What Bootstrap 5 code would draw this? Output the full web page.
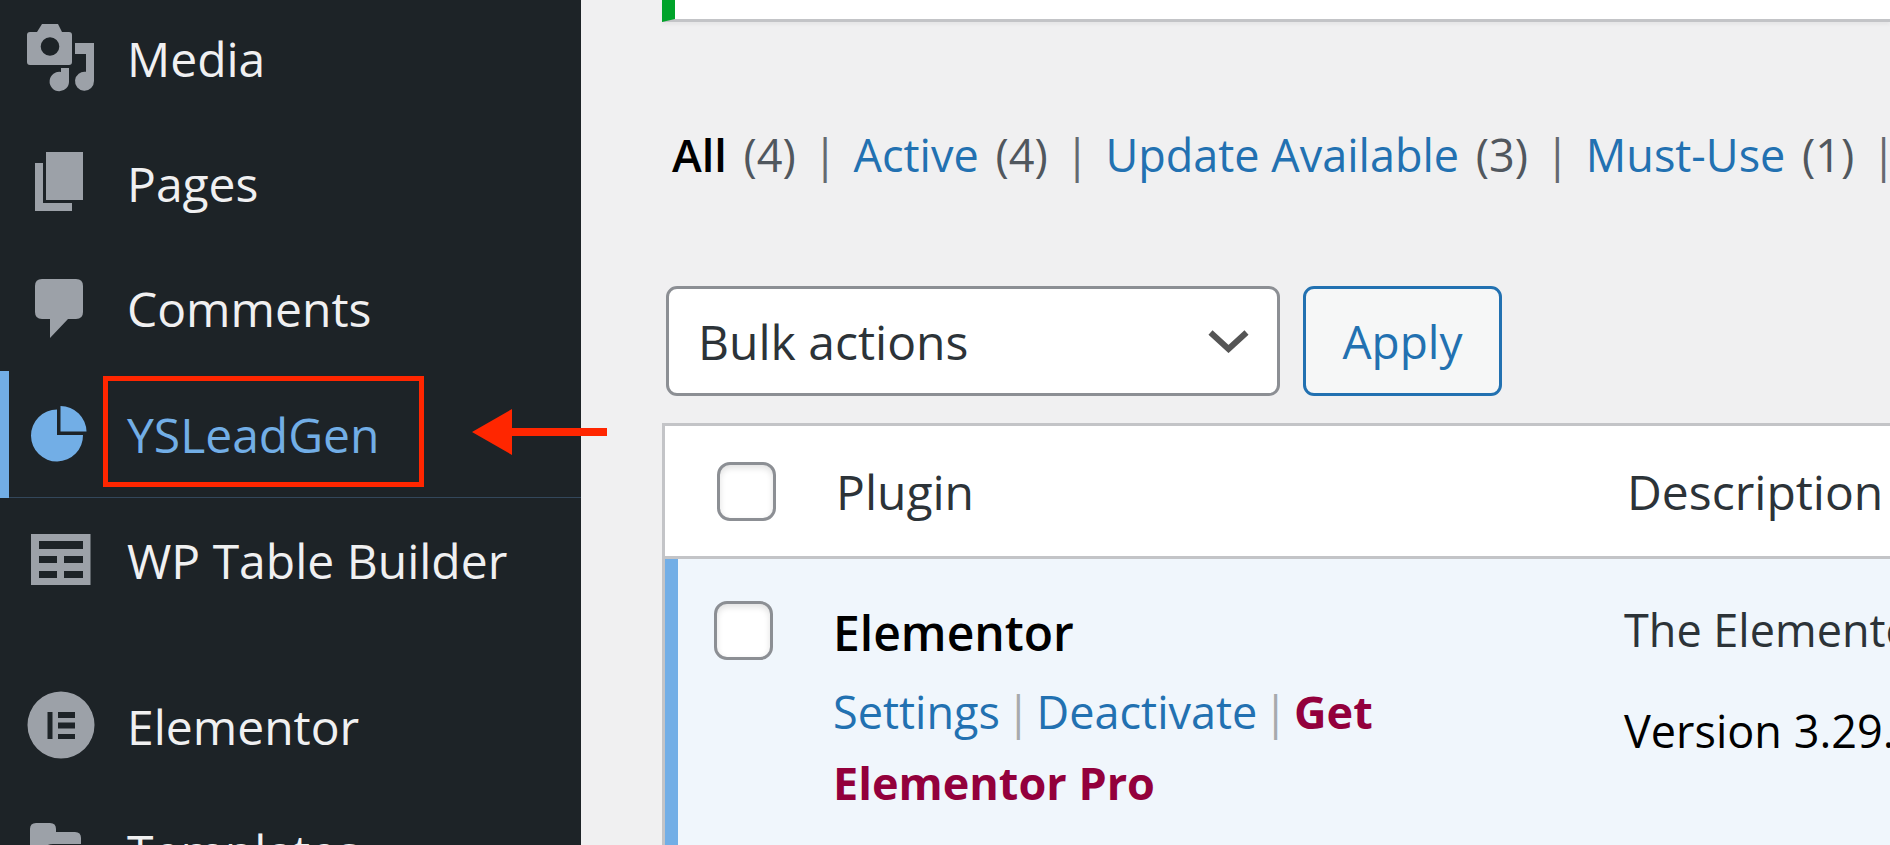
<!DOCTYPE html>
<html lang="en">
<head>
<meta charset="utf-8">
<meta name="viewport" content="width=device-width, initial-scale=1">
<title>Plugins</title>
<link href="https://cdn.jsdelivr.net/npm/bootstrap@5.3.0/dist/css/bootstrap.min.css" rel="stylesheet">
<style>
body{font-family:"Open Sans","Noto Sans",sans-serif;background:#f0f0f1;font-size:45px;line-height:71px;color:#2c3338}
a{text-decoration:none;color:#2271b1}
.side{width:581px;background:#1d2327}
.side-list{margin-top:-4px}
.side-link{height:125px;padding-left:23px;gap:30px;color:#f0f0f1;font-size:48px;white-space:nowrap;position:relative}
.side-link svg{width:74px;height:74px;margin-bottom:4px;flex:none;fill:#9ca1a8}
.side-item.active{border-bottom:1px solid #33475b}
.active .side-link{height:126px;color:#72aee6}
.active .side-link svg{fill:#72aee6}
.active .side-link::before{content:"";position:absolute;left:0;top:0;width:9px;height:127px;background:#72aee6}
.gap-row{height:41px}
.mark-box{position:absolute;left:103px;top:5px;width:321px;height:111px;border:5px solid #ff2600}
.active .side-link .mark-arrow{position:absolute;left:472px;top:38px;width:135px;height:46px;margin:0;fill:#ff2600;z-index:2}
.page-main{padding-left:81px;min-width:0}
.notice{height:22px;background:#fff;border-left:13px solid #00a32a;border-bottom:3px solid #c3c4c7;box-shadow:0 3px 3px rgba(0,0,0,.04)}
.subs{margin-top:97px;padding-left:10px;white-space:nowrap;color:#50575e}
.subs li{margin-right:16px}
.subs li::after{content:"|";margin-left:17px;color:#646970}
.subs a{margin-right:5px}
.subs .current{color:#000;font-weight:600}
.tools{margin:96px 0 27px 4px;gap:23px}
.bulk{width:614px;height:110px;border:3px solid #8c8f94;border-radius:11px;font-size:48px;line-height:71px;color:#2c3338;padding:0 0 0 29px;background:#fff url("data:image/svg+xml,%3Csvg xmlns='http://www.w3.org/2000/svg' viewBox='0 0 41 23'%3E%3Cpath d='M2.500 2.500 20.500 19 38.500 2.500' fill='none' stroke='%23555' stroke-width='6'/%3E%3C/svg%3E") no-repeat right 28px center/41px 23px}
.apply{width:199px;height:110px;border:3px solid #2271b1;border-radius:11px;background:#f6f7f7;color:#2271b1;font-size:46px;line-height:71px;padding:0}
.plugins{table-layout:fixed;border-left:3px solid #c3c4c7;border-collapse:separate;border-spacing:0;white-space:normal}
.plugins th{font-size:48px;font-weight:400;background:#fff;border-top:3px solid #c3c4c7;border-bottom:3px solid #c3c4c7;padding:30px 0 29px 37px}
.plugins td{background:#f0f6fc;vertical-align:top;padding:35px 34px 40px;overflow:hidden}
.plugins .c-check{width:134px;padding-left:52px}
.plugins td.c-check{border-left:13px solid #72aee6;padding:42px 0 0 36px}
.c-name{width:791px}
.tick{appearance:none;display:block;width:59px;height:59px;border:3px solid #8c8f94;border-radius:13px;background:#fff;box-shadow:inset 0 3px 6px rgba(0,0,0,.12)}
.p-name{font-size:48px;font-weight:600;color:#000;line-height:77px;margin-bottom:5px}
.bar{color:#a7aaad;margin:0 6px}
.pro{color:#93003c;font-weight:700}
.desc{white-space:nowrap}
.desc p{margin:0 0 30px}
</style>
</head>
<body>
<div class="d-flex vh-100 overflow-hidden">
<nav class="side flex-shrink-0" aria-label="Admin menu">
<ul class="list-unstyled side-list">
<li class="side-item"><a href="#" class="side-link d-flex align-items-center">
<svg viewBox="0 0 74 74" aria-hidden="true"><path fill-rule="evenodd" d="M14 12 19 4H35L39 12H46Q49 12 49 15V42Q49 45 46 45H7Q4 45 4 42V15Q4 12 7 12ZM27 17.200A9.300 9.300 0 1 0 27 35.800A9.300 9.300 0 1 0 27 17.200Z"/><path d="M52 23H71V61A9.500 9.500 0 1 1 63 51.800V34H52ZM38 48H46V61A9.700 9.700 0 1 1 38 52Z"/></svg>Media</a></li>
<li class="side-item"><a href="#" class="side-link d-flex align-items-center">
<svg viewBox="0 0 74 74" aria-hidden="true"><path d="M23 7H60V55H23ZM12 18H20V58H49V66H12Z"/></svg>Pages</a></li>
<li class="side-item"><a href="#" class="side-link d-flex align-items-center">
<svg viewBox="0 0 74 74" aria-hidden="true"><path d="M19 9H53Q60 9 60 16V42Q60 49 53 49H45L27 68V49H19Q12 49 12 42V16Q12 9 19 9Z"/></svg>Comments</a></li>
<li class="side-item active"><a href="#" class="side-link d-flex align-items-center" aria-current="page">
<svg viewBox="0 0 74 74" aria-hidden="true"><path d="M34 14.500V40H60A26 26 0 1 1 34 14.500ZM37.500 11A26 26 0 0 1 63.500 36.500H37.500Z"/></svg>YSLeadGen
<span class="mark-box"></span>
<svg class="mark-arrow" viewBox="0 0 135 46" aria-hidden="true"><path d="M0 23 40 0V19H135V27H40V46Z"/></svg></a></li>
<li class="side-item"><a href="#" class="side-link d-flex align-items-center">
<svg viewBox="0 0 74 74" aria-hidden="true"><path fill-rule="evenodd" d="M8 12H67.500V63H8ZM16 19V27H60V19ZM16 34V41H34V34ZM41 34V41H60V34ZM16 49V56H34V49ZM41 49V56H60V49Z"/></svg>WP Table Builder</a></li>
<li class="gap-row" aria-hidden="true"></li>
<li class="side-item"><a href="#" class="side-link d-flex align-items-center">
<svg viewBox="0 0 74 74" aria-hidden="true"><path fill-rule="evenodd" d="M38 3.500A33.500 33.500 0 1 0 38 70.500A33.500 33.500 0 1 0 38 3.500ZM24.500 24H29.500V51H24.500ZM35 24H52V30H35ZM35 34.500H52V40.500H35ZM35 46H52V51H35Z"/></svg>Elementor</a></li>
<li class="side-item"><a href="#" class="side-link d-flex align-items-center">
<svg viewBox="0 0 74 74" aria-hidden="true"><path d="M13 10H27Q33 10 33 16V19H52Q58 19 58 25V31H30Q22 31 20 38L13 60Q7 60 7 54V16Q7 10 13 10ZM31 36H68L60 60H18L24 41Q26 36 31 36Z"/></svg>Templates</a></li>
</ul>
</nav>
<main class="page-main flex-grow-1">
<div class="notice" role="status"></div>
<ul class="subs d-flex list-unstyled mb-0">
<li><a href="#" class="current">All</a> (4)</li>
<li><a href="#">Active</a> (4)</li>
<li><a href="#">Update Available</a> (3)</li>
<li><a href="#">Must-Use</a> (1)</li>
</ul>
<div class="tools d-flex">
<select class="form-select bulk" aria-label="Bulk actions"><option>Bulk actions</option></select>
<button type="button" class="btn apply">Apply</button>
</div>
<table class="plugins w-100">
<thead><tr>
<th class="c-check"><input type="checkbox" class="tick" aria-label="Select all"></th>
<th class="c-name" scope="col">Plugin</th>
<th scope="col">Description</th>
</tr></thead>
<tbody><tr>
<td class="c-check"><input type="checkbox" class="tick" aria-label="Select Elementor"></td>
<td><div class="p-name">Elementor</div>
<div><a href="#">Settings</a><span class="bar">|</span><a href="#">Deactivate</a><span class="bar">|</span><a href="#" class="pro">Get Elementor Pro</a></div></td>
<td class="desc"><p>The Elementor</p><p class="text-black">Version 3.29.</p></td>
</tr></tbody>
</table>
</main>
</div>
<script src="https://cdn.jsdelivr.net/npm/bootstrap@5.3.0/dist/js/bootstrap.bundle.min.js"></script>
</body>
</html>
